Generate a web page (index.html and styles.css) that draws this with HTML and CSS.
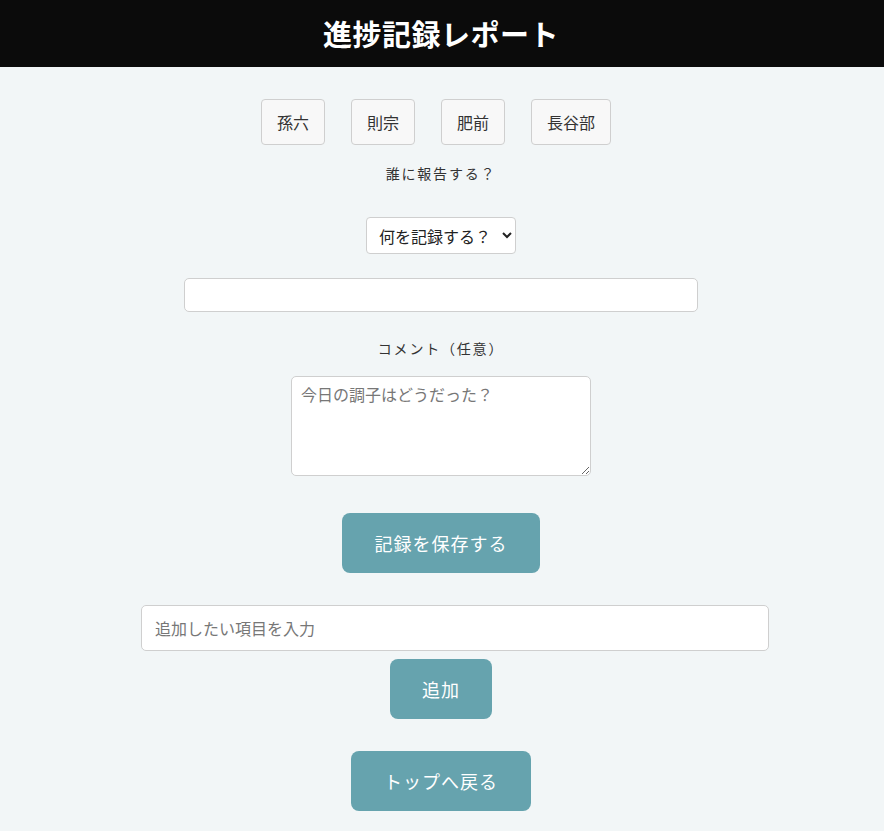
FILE: index.html
```html
<!DOCTYPE html>
<html lang="ja">
<head>
<meta charset="utf-8">
<title>進捗記録レポート</title>
<link rel="stylesheet" href="styles.css">
</head>
<body>
<header class="topbar"><h1 class="title">進捗記録レポート</h1></header>
<main class="content">
  <div class="who">
    <button class="who-btn">孫六</button>
    <button class="who-btn">則宗</button>
    <button class="who-btn">肥前</button>
    <button class="who-btn">長谷部</button>
  </div>
  <p class="label label-who">誰に報告する？</p>
  <select class="what">
    <option>何を記録する？</option>
  </select>
  <input class="value" type="text">
  <p class="label label-comment">コメント（任意）</p>
  <textarea class="comment" placeholder="今日の調子はどうだった？"></textarea>
  <button class="action save">記録を保存する</button>
  <input class="add-input" type="text" placeholder="追加したい項目を入力">
  <button class="action add">追加</button>
  <button class="action back">トップへ戻る</button>
</main>
</body>
</html>
```

FILE: styles.css
```css
* { box-sizing: border-box; }
html, body { margin: 0; padding: 0; }
body {
  background: #f2f6f7;
  font-family: "Noto Sans CJK JP", "Noto Sans", sans-serif;
  color: #333;
}
.topbar {
  background: #0b0b0b;
  height: 67px;
  display: flex;
  align-items: center;
  justify-content: center;
  padding-right: 2px;
}
.title {
  margin: 0;
  color: #fff;
  font-size: 29px;
  font-weight: 700;
  line-height: 1;
  letter-spacing: 0.5px;
}
.content {
  display: flex;
  flex-direction: column;
  align-items: center;
  padding-top: 32px;
  padding-right: 2px;
}
.who {
  display: flex;
  gap: 26px;
  margin-right: 10px;
}
.who-btn {
  height: 46px;
  padding: 0 15px;
  font-family: inherit;
  font-size: 16px;
  color: #333;
  background: #f8f8f8;
  border: 1px solid #cfcfcf;
  border-radius: 4px;
}
.label {
  margin: 0;
  font-size: 14px;
  line-height: 20px;
  letter-spacing: 1.8px;
  color: #333;
}
.label-who { margin-top: 18px; }
.what {
  margin-top: 34px;
  width: 150px;
  height: 37px;
  font-family: inherit;
  font-size: 16px;
  color: #222;
  background: #fff;
  border: 1px solid #cfcfcf;
  border-radius: 4px;
  padding: 0 8px;
}
.value {
  margin-top: 24px;
  width: 514px;
  height: 34px;
  background: #fff;
  border: 1px solid #cfcfcf;
  border-radius: 5px;
}
.label-comment { margin-top: 26px; }
.comment {
  margin-top: 18px;
  width: 300px;
  height: 100px;
  background: #fff;
  border: 1px solid #cfcfcf;
  border-radius: 5px;
  padding: 5px 9px;
  font-family: inherit;
  font-size: 16px;
  line-height: 24px;
  color: #333;
}
.comment::placeholder, .add-input::placeholder { color: #777; }
.action {
  height: 60px;
  border: none;
  border-radius: 8px;
  background: #66a3ae;
  color: #fff;
  font-family: inherit;
  font-size: 18px;
  letter-spacing: 1px;
  padding: 0;
}
.save { margin-top: 37px; width: 198px; }
.add-input {
  margin-top: 32px;
  margin-left: 28px;
  width: 628px;
  height: 46px;
  background: #fff;
  border: 1px solid #cfcfcf;
  border-radius: 5px;
  padding: 0 13px;
  font-family: inherit;
  font-size: 16px;
}
.add { margin-top: 8px; width: 102px; }
.back { margin-top: 32px; width: 180px; }
```
